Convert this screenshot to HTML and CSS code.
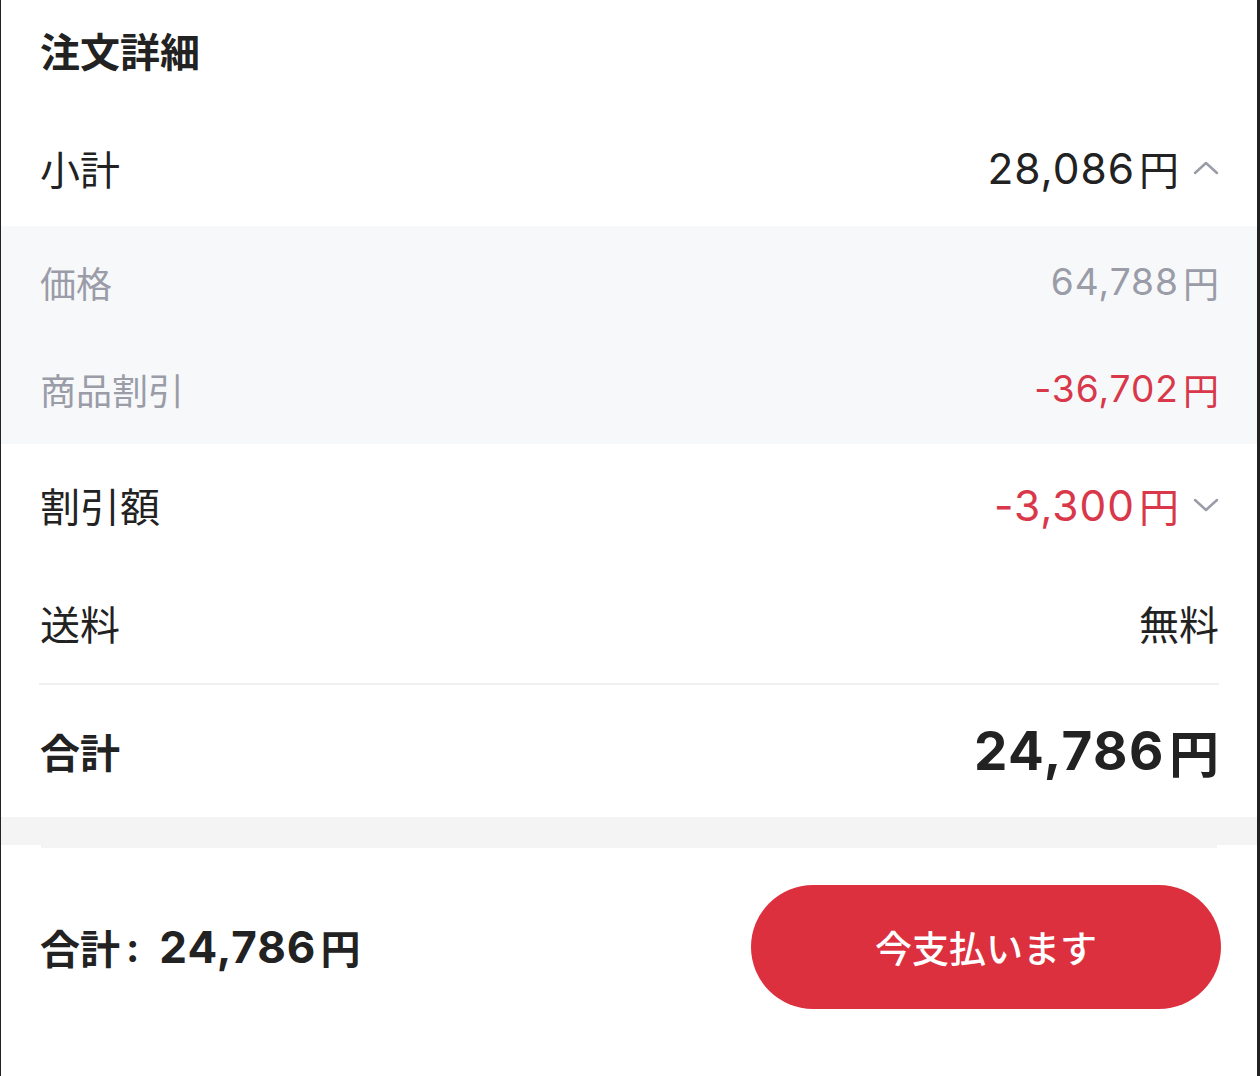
FILE: index.html
```html
<!DOCTYPE html>
<html lang="ja">
<head>
    <meta charset="UTF-8">
    <meta name="viewport" content="width=device-width, initial-scale=1.0">
    <title>注文詳細</title>
    <link rel="stylesheet" href="styles.css">
</head>
<body>
    <div class="page">
        <div class="details">
            <div class="title">注文詳細</div>

            <div class="row row-subtotal">
                <span class="label">小計</span>
                <span class="value"><span class="num">28,086</span><span class="yen">円</span>
                    <svg class="chevron" viewBox="0 0 26 14" width="26" height="14"><path d="M2 12 L13 2 L24 12"/></svg>
                </span>
            </div>

            <div class="sub-rows">
                <div class="row sub">
                    <span class="label">価格</span>
                    <span class="value"><span class="num">64,788</span><span class="yen">円</span></span>
                </div>
                <div class="row sub">
                    <span class="label">商品割引</span>
                    <span class="value red"><span class="num">-36,702</span><span class="yen">円</span></span>
                </div>
            </div>

            <div class="row row-discount">
                <span class="label">割引額</span>
                <span class="value red"><span class="num">-3,300</span><span class="yen">円</span>
                    <svg class="chevron" viewBox="0 0 26 14" width="26" height="14"><path d="M2 2 L13 12 L24 2"/></svg>
                </span>
            </div>

            <div class="row row-shipping">
                <span class="label">送料</span>
                <span class="value">無料</span>
            </div>

            <div class="row total">
                <span class="label">合計</span>
                <span class="value"><span class="num">24,786</span><span class="yen">円</span></span>
            </div>
        </div>

        <div class="band"></div>

        <div class="footer">
            <div class="footer-total">合計<span class="colon">:</span><span class="num">24,786</span><span class="yen">円</span></div>
            <button class="pay">今支払います</button>
        </div>
    </div>
</body>
</html>
```

FILE: styles.css
```css
* {
    box-sizing: border-box;
}

body {
    margin: 0;
    background: #fff;
    font-family: Inter, "Noto Sans CJK JP", sans-serif;
    color: #222;
}

.page {
    width: 1260px;
    height: 1076px;
    border-left: 1px solid #222;
    border-right: 3px solid #222;
    display: flex;
    flex-direction: column;
}

.title {
    height: 110px;
    padding: 0 39px 10px;
    display: flex;
    align-items: center;
    font-size: 40px;
    font-weight: 700;
}

.row {
    display: flex;
    align-items: center;
    justify-content: space-between;
    padding: 0 38px 0 39px;
    font-size: 40px;
}

.value {
    display: flex;
    align-items: center;
}

.num {
    font-size: 1.06em;
    letter-spacing: 1px;
}

.yen {
    margin-left: 4px;
}

.chevron {
    margin-left: 14px;
    fill: none;
    stroke: #9a9ca8;
    stroke-width: 2.5;
    stroke-linecap: round;
    stroke-linejoin: round;
}

.red {
    color: #d8384a;
}

.row-subtotal {
    height: 116px;
}

.sub-rows {
    background: #f7f8fa;
    padding: 2px 0;
}

.row.sub {
    height: 107px;
    font-size: 36px;
    color: #9a9ca8;
}

.row.sub .num {
    font-size: 1.03em;
}

.row.sub .red {
    color: #d8384a;
}

.row-discount {
    height: 122px;
}

.row-shipping {
    height: 117px;
    padding-bottom: 4px;
}

.total {
    margin: 0 38px;
    padding: 0;
    height: 134px;
    border-top: 2px solid #efefef;
    font-weight: 700;
}

.total .label {
    padding-left: 1px;
}

.total .value {
    font-size: 50px;
}

.total .num {
    letter-spacing: 1.5px;
}

.band {
    height: 31px;
    background: #f4f4f4;
    border-bottom: 3px solid #fff;
    position: relative;
}

.band::after {
    content: "";
    position: absolute;
    left: 40px;
    right: 40px;
    bottom: -3px;
    height: 3px;
    background: #f4f4f4;
}

.footer {
    flex: 1;
    display: flex;
    align-items: flex-start;
    justify-content: space-between;
    padding: 37px 36px 0 39px;
}

.footer-total {
    height: 124px;
    display: flex;
    align-items: center;
    font-size: 40px;
    font-weight: 700;
}

.footer-total .colon {
    margin: 0 20px 0 6px;
}

.footer-total .num {
    font-size: 44px;
}

.pay {
    width: 470px;
    height: 124px;
    border: none;
    border-radius: 62px;
    background: #dc303f;
    color: #fff;
    font-family: inherit;
    font-size: 37px;
    font-weight: 500;
    cursor: pointer;
}
```
